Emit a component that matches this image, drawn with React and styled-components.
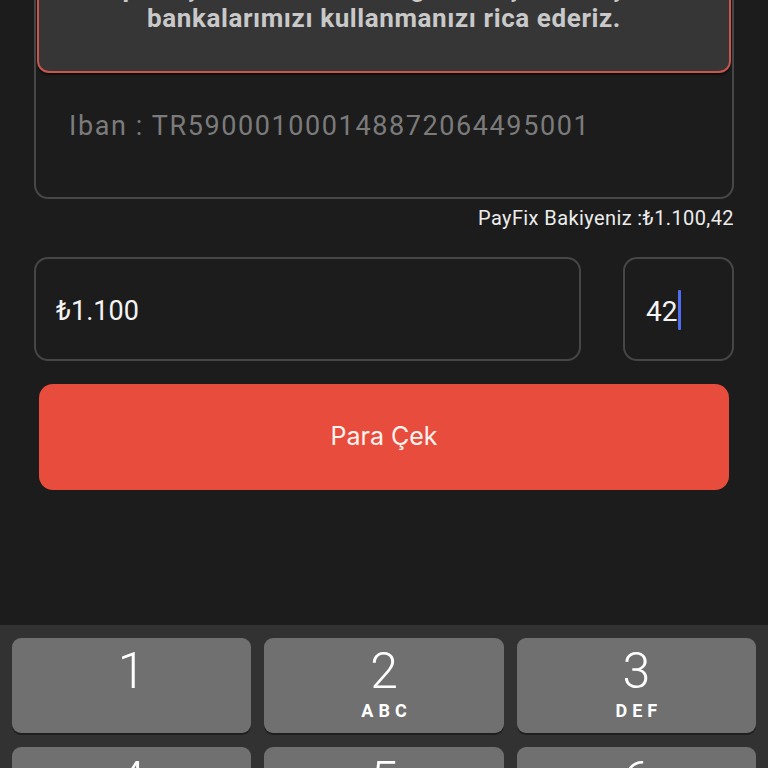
import React from "react";
import styled, { createGlobalStyle } from "styled-components";

const Global = createGlobalStyle`
  html, body { margin: 0; padding: 0; background: #1c1c1c; }
  body { font-family: Roboto, "Noto Sans", sans-serif; }
  * { box-sizing: border-box; }
`;

const Screen = styled.div`
  height: 768px;
  display: flex;
  flex-direction: column;
  overflow: hidden;
  background: #1c1c1c;
`;

const Content = styled.div`
  flex: 1;
  margin-top: -52px;
  padding: 0 34px;
  display: flex;
  flex-direction: column;
`;

const IbanBox = styled.div`
  border: 2px solid #474747;
  border-radius: 14px;
  padding: 1px 1px 0;
`;

const Warning = styled.div`
  background: #363636;
  border: 2px solid #c9554c;
  border-radius: 12px;
  padding: 20px 12px 38px;
  box-shadow: 0 2px 2px rgba(0, 0, 0, 0.5);
  color: #c9c9c9;
  font-family: Roboto, sans-serif;
  font-weight: 700;
  font-size: 26px;
  line-height: 30px;
  letter-spacing: 0.6px;
  text-align: center;
  white-space: nowrap;
`;

const IbanText = styled.div`
  padding: 37px 32px 55px;
  color: #7b7b7b;
  font-size: 27px;
  line-height: 32px;
  letter-spacing: 1.6px;
  font-family: Roboto, sans-serif;
`;

const Balance = styled.div`
  margin-top: 8px;
  text-align: right;
  color: #ececec;
  font-size: 20px;
  letter-spacing: 0.4px;
  line-height: 22px;
`;

const InputsRow = styled.div`
  margin-top: 28px;
  display: grid;
  grid-template-columns: 1fr 111px;
  gap: 42px;
`;

const Field = styled.div`
  height: 104px;
  border: 2px solid #464646;
  border-radius: 14px;
  display: flex;
  align-items: center;
  padding-top: 4px;
  padding-left: ${(p) => p.$pad}px;
  color: #f4f4f4;
  font-size: ${(p) => p.$size}px;
`;

const Caret = styled.span`
  display: inline-block;
  width: 3px;
  height: 40px;
  background: #4f6ef2;
  border-radius: 1px;
  margin-left: 1px;
  margin-bottom: 3px;
  vertical-align: middle;
`;

const Button = styled.button`
  margin: 23px 5px 0;
  height: 106px;
  border: none;
  border-radius: 14px;
  background: #e84c3d;
  color: #fff4f0;
  font-family: Inter, sans-serif;
  font-size: 25px;
  font-weight: 400;
  padding-bottom: 4px;
`;

const Keyboard = styled.div`
  flex: none;
  height: 143px;
  background: #323232;
  padding: 13px 12px 0;
  display: grid;
  grid-template-columns: repeat(3, 1fr);
  grid-auto-rows: 95px;
  column-gap: 13px;
  row-gap: 14px;
  overflow: hidden;
`;

const Key = styled.div`
  background: #707070;
  border-radius: 9px;
  box-shadow: 0 2px 0 #1f1f1f;
  display: flex;
  flex-direction: column;
  align-items: center;
  color: #fff;
  font-family: Roboto, sans-serif;
`;

const Digit = styled.div`
  font-size: 50px;
  font-weight: 300;
  line-height: 52px;
  margin-top: 7px;
`;

const Letters = styled.div`
  font-size: 18px;
  font-weight: 700;
  letter-spacing: 5px;
  margin-left: 5px;
  line-height: 20px;
  margin-top: 4px;
`;

const keys = [
  ["1", ""],
  ["2", "ABC"],
  ["3", "DEF"],
  ["4", "GHI"],
  ["5", "JKL"],
  ["6", "MNO"],
];

export default function App() {
  return (
    <Screen>
      <Global />
      <Content>
        <IbanBox>
          <Warning>
            para çekiminizi hızlı ve güvenli şekilde için
            <br />
            bankalarımızı kullanmanızı rica ederiz.
          </Warning>
          <IbanText>Iban : TR590001000148872064495001</IbanText>
        </IbanBox>
        <Balance>PayFix Bakiyeniz :₺1.100,42</Balance>
        <InputsRow>
          <Field $pad={20} $size={27}>₺1.100</Field>
          <Field $pad={21} $size={28}>
            42
            <Caret />
          </Field>
        </InputsRow>
        <Button>Para Çek</Button>
      </Content>
      <Keyboard>
        {keys.map(([d, l]) => (
          <Key key={d}>
            <Digit>{d}</Digit>
            {l && <Letters>{l}</Letters>}
          </Key>
        ))}
      </Keyboard>
    </Screen>
  );
}
